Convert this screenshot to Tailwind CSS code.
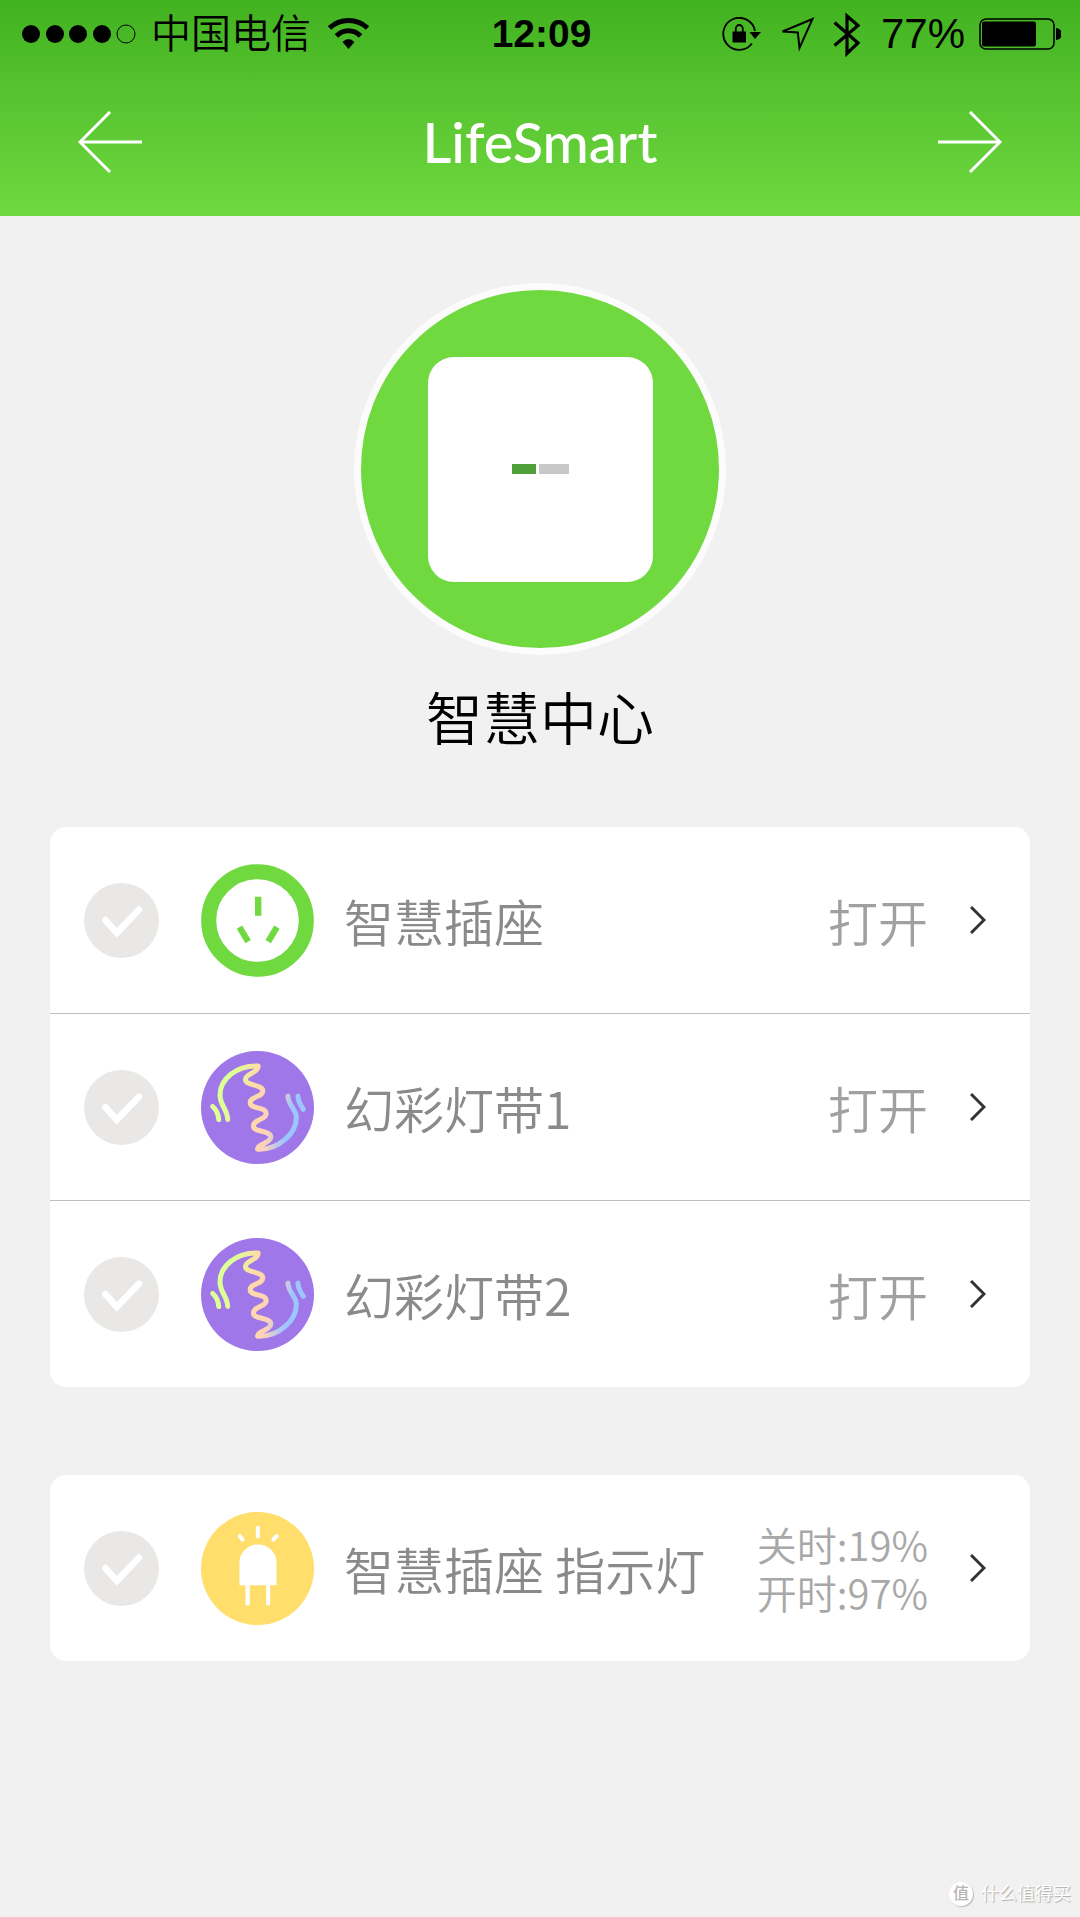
<!DOCTYPE html>
<html lang="zh-CN">
<head>
<meta charset="utf-8">
<meta name="viewport" content="width=device-width, initial-scale=1">
<title>LifeSmart</title>
<script src="https://cdn.jsdelivr.net/npm/@tailwindcss/browser@4"></script>
</head>
<body class="relative min-h-screen bg-[#f1f1f1] font-['Liberation_Sans','Noto_Sans_CJK_SC',sans-serif] font-[350] text-black">

<svg class="absolute size-0" aria-hidden="true">
  <defs>
    <symbol id="tick" viewBox="0 0 224 224">
      <path d="M64 111L98 149L164 80" fill="none" stroke="#fff" stroke-width="20" stroke-linecap="round"/>
    </symbol>
    <symbol id="chevron" viewBox="0 0 16 28">
      <path d="M1 1L14 14L1 27" fill="none" stroke="#333" stroke-width="3"/>
    </symbol>
    <linearGradient id="neon" gradientUnits="userSpaceOnUse" x1="115" y1="200" x2="355" y2="260">
      <stop offset="0.1" stop-color="#dcff96"/>
      <stop offset="0.4" stop-color="#ffd9a8"/>
      <stop offset="0.68" stop-color="#fdd2b8"/>
      <stop offset="0.9" stop-color="#9dc6ff"/>
    </linearGradient>
    <symbol id="strip" viewBox="63 61 338 338">
      <circle cx="232" cy="230" r="169" fill="#9f77e9"/>
      <g fill="none" stroke-width="15" stroke-linecap="round" stroke-linejoin="round">
        <path stroke="url(#neon)" d="M143 266C142 235 121 225 120 195C118 145 170 103 234 106C236 126 196 128 196 146C196 166 248 160 248 180C248 200 210 196 210 216C210 236 258 226 258 248C258 268 220 264 220 286C220 304 272 298 272 318C272 336 230 340 232 355C296 358 350 306 348 258C347 236 325 224 323 196"/>
        <path stroke="#dcff96" d="M98 227C110 238 115 250 116 266"/>
        <path stroke="#9dc6ff" d="M353 196C354 214 361 224 369 235"/>
      </g>
    </symbol>
  </defs>
</svg>

<header class="bg-linear-to-b from-[#41b220] to-[#70d940]">
  <div class="grid h-[68px] grid-cols-[1fr_auto_1fr] items-center pr-[19px] pl-[22px]">
    <div class="flex items-center">
      <svg class="h-5 w-[114px]" viewBox="0 0 114 20" aria-label="信号">
        <circle cx="9" cy="10" r="9"/><circle cx="33" cy="10" r="9"/><circle cx="56" cy="10" r="9"/><circle cx="80" cy="10" r="9"/>
        <circle cx="104" cy="10" r="9" fill="none" stroke="#000" stroke-width="1"/>
      </svg>
      <span class="ml-[15px] text-[40px] leading-[52px] whitespace-nowrap">中国电信</span>
      <svg class="ml-[17px] h-8 w-[41px]" viewBox="0 0 41 32" aria-label="Wi-Fi">
        <path d="M1.500 10C12 0 29 0 39.500 10M8.500 18C15 11 26 11 32.500 18" fill="none" stroke="#000" stroke-width="5"/>
        <path d="M14.500 24Q20.500 18 26.500 24L20.500 31Z"/>
      </svg>
    </div>
    <time class="text-[39px] leading-[52px] font-bold">12:09</time>
    <div class="flex items-center justify-end">
      <svg class="h-[34px] w-10" viewBox="0 0 40 34" aria-label="方向锁定">
        <path d="M33 14A16 16 0 1 0 30 26.500" fill="none" stroke="#000" stroke-width="1.800"/>
        <path d="M27.500 15H39L33 22Z"/>
        <rect x="10.500" y="14.500" width="13.500" height="11"/>
        <path d="M13.800 15V11.500A3.500 3.500 0 0 1 20.800 11.500V15" fill="none" stroke="#000" stroke-width="1.800"/>
      </svg>
      <svg class="ml-[18px] h-[35px] w-[35px]" viewBox="0 0 35 35" aria-label="定位">
        <path d="M32.500 2L2.500 14.500L17.800 15.500L19.500 31Z" fill="none" stroke="#000" stroke-width="2"/>
      </svg>
      <svg class="ml-[18px] h-[45px] w-[27px]" viewBox="0 0 27 45" aria-label="蓝牙">
        <path d="M1.500 10.500L25 31L14 41.500V4L25 13.500L1.500 33.500" fill="none" stroke="#000" stroke-width="3.200"/>
      </svg>
      <span class="mr-[14px] ml-[21px] text-[42px] leading-[52px]">77%</span>
      <svg class="h-8 w-[82px]" viewBox="0 0 82 32" aria-label="电池">
        <rect x="1" y="1" width="74" height="30" rx="6" fill="none" stroke="#000" stroke-width="1.600"/>
        <rect x="3" y="3.500" width="54" height="25" rx="2"/>
        <path d="M77 10A6 6 0 0 1 77 22Z"/>
      </svg>
    </div>
  </div>
  <nav class="flex h-[148px] items-center justify-between px-[78px]">
    <button type="button" aria-label="返回">
      <svg class="h-[62px] w-16" viewBox="0 0 64 62"><path d="M32 1L2 31L32 61M2 31H64" fill="none" stroke="#fff" stroke-width="3"/></svg>
    </button>
    <h1 class="font-['Lato'] text-[56px] leading-none font-medium text-white">LifeSmart</h1>
    <button type="button" aria-label="前进">
      <svg class="h-[62px] w-16" viewBox="0 0 64 62"><path d="M32 1L62 31L32 61M62 31H0" fill="none" stroke="#fff" stroke-width="3"/></svg>
    </button>
  </nav>
</header>

<main class="px-[50px] font-['Noto_Sans_CJK_SC',sans-serif]">
  <section class="flex flex-col items-center pt-[67px]">
    <div class="flex size-[372px] items-center justify-center rounded-full border-[7px] border-[#fcfcfc] bg-[#70d940]">
      <div class="flex size-[225px] items-center justify-center gap-[3px] rounded-[26px] bg-white">
        <span class="h-[10px] w-6 bg-[#4fa038]"></span>
        <span class="h-[10px] w-[30px] bg-[#c8c8c8]"></span>
      </div>
    </div>
    <h2 class="mt-5 text-[57px] leading-[80px]">智慧中心</h2>
  </section>

  <ul class="mt-[72px] divide-y divide-[#c0c0c0] rounded-2xl bg-white">
    <li class="flex h-[187px] items-center pr-[44px] pl-[34px]">
      <label class="relative size-[75px] shrink-0">
        <input type="checkbox" aria-label="智慧插座" class="block size-[75px] appearance-none rounded-full bg-[#e9e8e6]">
        <svg class="pointer-events-none absolute inset-0 size-[75px]"><use href="#tick"/></svg>
      </label>
      <a href="#socket" class="ml-[42px] flex flex-1 items-center">
        <svg class="size-[113px]" viewBox="0 0 338 338">
          <circle cx="169" cy="169" r="146" fill="#fff" stroke="#70d940" stroke-width="45"/>
          <path d="M171 98V155M115 189L141 232M227 189L201 232" fill="none" stroke="#70d940" stroke-width="19"/>
        </svg>
        <span class="ml-[30px] text-[50px] leading-[70px] text-[#8a8a8a]">智慧插座</span>
        <span class="ml-auto text-[50px] leading-[70px] text-[#a0a0a0]">打开</span>
        <svg class="ml-[42px] h-7 w-4"><use href="#chevron"/></svg>
      </a>
    </li>
    <li class="flex h-[187px] items-center pr-[44px] pl-[34px]">
      <label class="relative size-[75px] shrink-0">
        <input type="checkbox" aria-label="幻彩灯带1" class="block size-[75px] appearance-none rounded-full bg-[#e9e8e6]">
        <svg class="pointer-events-none absolute inset-0 size-[75px]"><use href="#tick"/></svg>
      </label>
      <a href="#strip-1" class="ml-[42px] flex flex-1 items-center">
        <svg class="size-[113px]"><use href="#strip"/></svg>
        <span class="ml-[30px] text-[50px] leading-[70px] text-[#8a8a8a]">幻彩灯带1</span>
        <span class="ml-auto text-[50px] leading-[70px] text-[#a0a0a0]">打开</span>
        <svg class="ml-[42px] h-7 w-4"><use href="#chevron"/></svg>
      </a>
    </li>
    <li class="flex h-[186px] items-center pr-[44px] pl-[34px]">
      <label class="relative size-[75px] shrink-0">
        <input type="checkbox" aria-label="幻彩灯带2" class="block size-[75px] appearance-none rounded-full bg-[#e9e8e6]">
        <svg class="pointer-events-none absolute inset-0 size-[75px]"><use href="#tick"/></svg>
      </label>
      <a href="#strip-2" class="ml-[42px] flex flex-1 items-center">
        <svg class="size-[113px]"><use href="#strip"/></svg>
        <span class="ml-[30px] text-[50px] leading-[70px] text-[#8a8a8a]">幻彩灯带2</span>
        <span class="ml-auto text-[50px] leading-[70px] text-[#a0a0a0]">打开</span>
        <svg class="ml-[42px] h-7 w-4"><use href="#chevron"/></svg>
      </a>
    </li>
  </ul>

  <ul class="mt-[88px] rounded-2xl bg-white">
    <li class="flex h-[186px] items-center pr-[44px] pl-[34px]">
      <label class="relative size-[75px] shrink-0">
        <input type="checkbox" aria-label="智慧插座 指示灯" class="block size-[75px] appearance-none rounded-full bg-[#e9e8e6]">
        <svg class="pointer-events-none absolute inset-0 size-[75px]"><use href="#tick"/></svg>
      </label>
      <a href="#indicator" class="ml-[42px] flex flex-1 items-center">
        <svg class="size-[113px]" viewBox="34 35 338 338">
          <circle cx="203" cy="204" r="169" fill="#ffde6c"/>
          <path d="M149 254V186A55.500 54 0 0 1 260 186V254H241V310Q241 315 235 315T229 310V254H180V310Q180 315 173 315T167 310V254Z" fill="#fff"/>
          <path d="M204 82V108M150 107L158 117M260 107L251 117" fill="none" stroke="#fff" stroke-width="12" stroke-linecap="round"/>
        </svg>
        <span class="ml-[30px] text-[50px] leading-[70px] whitespace-nowrap text-[#8a8a8a]">智慧插座 指示灯</span>
        <span class="ml-auto text-[40px] leading-[48px] whitespace-nowrap text-[#a8a8a8]">关时:19%<br>开时:97%</span>
        <svg class="ml-[42px] h-7 w-4"><use href="#chevron"/></svg>
      </a>
    </li>
  </ul>
</main>

<div class="absolute right-[9px] bottom-[10px] flex items-center gap-2 text-white">
  <span class="flex size-6 items-center justify-center rounded-full bg-white text-base leading-none font-medium text-[#b4b4b4] shadow-[1px_1px_1px_#bbb]">值</span>
  <span class="text-lg leading-[26px] font-normal text-shadow-[1px_1px_1px_#aaa]">什么值得买</span>
</div>
</body>
</html>
